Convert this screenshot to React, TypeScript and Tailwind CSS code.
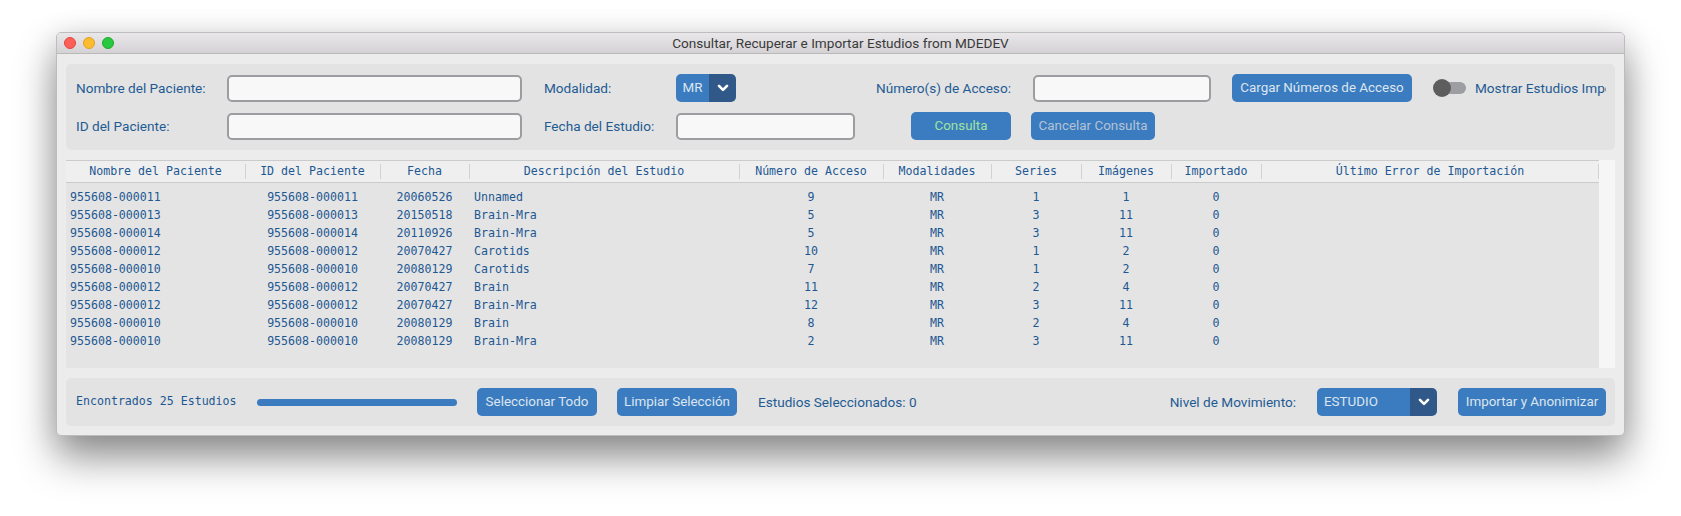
import React from "react";

const SANS = { fontFamily: "Roboto, 'Liberation Sans', Arial, sans-serif" };
const MONO = { fontFamily: "'DejaVu Sans Mono', 'Liberation Mono', monospace" };

const rows: string[][] = [
  ["955608-000011", "955608-000011", "20060526", "Unnamed", "9", "MR", "1", "1", "0"],
  ["955608-000013", "955608-000013", "20150518", "Brain-Mra", "5", "MR", "3", "11", "0"],
  ["955608-000014", "955608-000014", "20110926", "Brain-Mra", "5", "MR", "3", "11", "0"],
  ["955608-000012", "955608-000012", "20070427", "Carotids", "10", "MR", "1", "2", "0"],
  ["955608-000010", "955608-000010", "20080129", "Carotids", "7", "MR", "1", "2", "0"],
  ["955608-000012", "955608-000012", "20070427", "Brain", "11", "MR", "2", "4", "0"],
  ["955608-000012", "955608-000012", "20070427", "Brain-Mra", "12", "MR", "3", "11", "0"],
  ["955608-000010", "955608-000010", "20080129", "Brain", "8", "MR", "2", "4", "0"],
  ["955608-000010", "955608-000010", "20080129", "Brain-Mra", "2", "MR", "3", "11", "0"],
];

const headers = [
  "Nombre del Paciente",
  "ID del Paciente",
  "Fecha",
  "Descripción del Estudio",
  "Número de Acceso",
  "Modalidades",
  "Series",
  "Imágenes",
  "Importado",
  "Último Error de Importación",
];

const GRID = "grid grid-cols-[179px_135px_89px_270px_144px_108px_90px_90px_90px_338px]";

const cellAlign = [
  "text-left pl-[4px]",
  "text-center",
  "text-center",
  "text-left pl-[5px]",
  "text-center",
  "text-center",
  "text-center",
  "text-center",
  "text-center",
  "text-center",
];

function Chevron() {
  return (
    <svg width="12" height="8" viewBox="0 0 12 8">
      <polyline points="2,1.8 6,5.8 10,1.8" fill="none" stroke="#ffffff" strokeWidth="2.6" strokeLinecap="round" strokeLinejoin="round" />
    </svg>
  );
}

function Btn({ children, w, text = "text-[#dde5ee]" }: { children: React.ReactNode; w: string; text?: string }) {
  return (
    <div className={`${w} h-[28px] shrink-0 rounded-[5px] bg-[#3b7cc0] flex items-center justify-center text-[13.4px] whitespace-nowrap ${text}`} style={SANS}>
      {children}
    </div>
  );
}

function Input({ w }: { w: string }) {
  return <div className={`${w} h-[27px] shrink-0 rounded-[5px] border-2 border-[#9b9da1] bg-[#f8f8f8]`} />;
}

function Label({ children, w }: { children: React.ReactNode; w?: string }) {
  return (
    <div className={`${w ?? ""} shrink-0 text-[13.6px] text-[#1f5b93] whitespace-nowrap`} style={SANS}>
      {children}
    </div>
  );
}

export default function App() {
  return (
    <div className="w-[1681px] h-[516px] bg-white overflow-hidden pt-[32px] pl-[56px]">
      <div className="w-[1569px] rounded-[5px] bg-[#ececec] border border-[#bdbdbd] shadow-[0_22px_40px_rgba(0,0,0,0.42),0_4px_30px_rgba(0,0,0,0.12)] overflow-hidden">
        {/* title bar */}
        <div className="relative h-[21px] bg-gradient-to-b from-[#e9e7e9] to-[#d4d2d4] border-b border-[#b9b9b9] flex items-center justify-center">
          <div className="absolute left-[7px] top-[4px] flex gap-[7px]">
            <div className="w-[12px] h-[12px] rounded-full bg-[#fc5f57] border border-[#e2463f]" />
            <div className="w-[12px] h-[12px] rounded-full bg-[#fdbc2e] border border-[#dfa023]" />
            <div className="w-[12px] h-[12px] rounded-full bg-[#28c840] border border-[#1aab29]" />
          </div>
          <div className="text-[13.6px] text-[#3a3a3a]" style={SANS}>
            Consultar, Recuperar e Importar Estudios from MDEDEV
          </div>
        </div>

        <div className="px-[9px] pt-[10px] pb-[9px] flex flex-col gap-[10px]">
          {/* top panel */}
          <div className="rounded-[5px] bg-[#e3e3e3] pl-[10px] pr-[9px] py-[10px] flex flex-col gap-[10px]">
            <div className="flex items-center h-[28px] overflow-hidden">
              <Label w="w-[151px]">Nombre del Paciente:</Label>
              <Input w="w-[295px]" />
              <div className="w-[22px] shrink-0" />
              <Label w="w-[132px]">Modalidad:</Label>
              <div className="w-[60px] h-[28px] shrink-0 rounded-[5px] overflow-hidden flex">
                <div className="w-[33px] bg-[#3b7cc0] flex items-center justify-center text-[13.4px] text-[#dbe5ef]" style={SANS}>MR</div>
                <div className="flex-1 bg-[#30598a] flex items-center justify-center">
                  <Chevron />
                </div>
              </div>
              <div className="w-[140px] shrink-0" />
              <Label w="w-[157px]">Número(s) de Acceso:</Label>
              <Input w="w-[178px]" />
              <div className="w-[21px] shrink-0" />
              <Btn w="w-[180px]">Cargar Números de Acceso</Btn>
              <div className="w-[21px] shrink-0" />
              <div className="relative w-[33px] h-[18px] shrink-0">
                <div className="absolute left-[4px] right-0 top-[3px] h-[12px] rounded-full bg-[#9c9ea1]" />
                <div className="absolute left-0 top-0 w-[18px] h-[18px] rounded-full bg-[#5d5d5e]" />
              </div>
              <div className="w-[9px] shrink-0" />
              <Label>Mostrar Estudios Importados</Label>
            </div>
            <div className="flex items-center h-[28px]">
              <Label w="w-[151px]">ID del Paciente:</Label>
              <Input w="w-[295px]" />
              <div className="w-[22px] shrink-0" />
              <Label w="w-[132px]">Fecha del Estudio:</Label>
              <Input w="w-[179px]" />
              <div className="w-[56px] shrink-0" />
              <Btn w="w-[100px]" text="text-[#9ee39c]">Consulta</Btn>
              <div className="w-[20px] shrink-0" />
              <Btn w="w-[124px]" text="text-[#b4c3d4]">Cancelar Consulta</Btn>
            </div>
          </div>

          {/* table */}
          <div className="flex h-[208px] text-[11.6px] text-[#1d5893]" style={MONO}>
            <div className="w-[1533px] bg-[#e4e4e4] flex flex-col">
              <div className={`${GRID} h-[23px] bg-[#efefef] border-t border-b border-[#cbcbcb]`}>
                {headers.map((h, i) => (
                  <div key={i} className={`flex items-center justify-center whitespace-nowrap ${i > 0 ? "relative" : ""}`}>
                    {i > 0 && <div className="absolute left-0 top-[3px] bottom-[3px] w-px bg-[#d2d2d2]" />}
                    {h}
                    {i === 9 && <div className="absolute right-0 top-[3px] bottom-[3px] w-px bg-[#d2d2d2]" />}
                  </div>
                ))}
              </div>
              <div className="pt-[5px]">
                {rows.map((r, ri) => (
                  <div key={ri} className={`${GRID} h-[18px] leading-[18px]`}>
                    {r.map((c, ci) => (
                      <div key={ci} className={`whitespace-nowrap ${cellAlign[ci]}`}>{c}</div>
                    ))}
                    <div />
                  </div>
                ))}
              </div>
            </div>
            <div className="flex-1 bg-[#f6f6f6]" />
          </div>

          {/* bottom panel */}
          <div className="h-[48px] rounded-[5px] bg-[#e3e3e3] pl-[10px] pr-[9px] flex items-center">
            <div className="w-[162px] shrink-0 text-[11.6px] text-[#1d5893] whitespace-nowrap" style={MONO}>Encontrados 25 Estudios</div>
            <div className="w-[19px] shrink-0" />
            <div className="w-[200px] h-[7px] shrink-0 rounded-full bg-[#3b7cc0]" />
            <div className="w-[20px] shrink-0" />
            <Btn w="w-[120px]">Seleccionar Todo</Btn>
            <div className="w-[20px] shrink-0" />
            <Btn w="w-[120px]">Limpiar Selección</Btn>
            <div className="w-[21px] shrink-0" />
            <Label>Estudios Seleccionados: 0</Label>
            <div className="flex-1" />
            <Label>Nivel de Movimiento:</Label>
            <div className="w-[21px] shrink-0" />
            <div className="w-[120px] h-[28px] shrink-0 rounded-[5px] overflow-hidden flex">
              <div className="w-[93px] bg-[#3b7cc0] flex items-center pl-[7px] text-[13.4px] text-[#dbe5ef]" style={SANS}>ESTUDIO</div>
              <div className="flex-1 bg-[#30598a] flex items-center justify-center">
                <Chevron />
              </div>
            </div>
            <div className="w-[21px] shrink-0" />
            <Btn w="w-[148px]">Importar y Anonimizar</Btn>
          </div>
        </div>
      </div>
    </div>
  );
}
